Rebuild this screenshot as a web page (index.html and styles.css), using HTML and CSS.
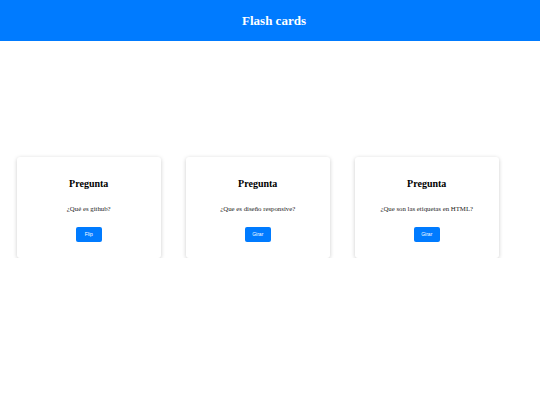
FILE: index.html
```html
<!DOCTYPE html>
<html lang="es">
<head>
<meta charset="utf-8">
<title>Flash cards</title>
<link rel="stylesheet" href="styles.css">
</head>
<body>
<header class="header">
  <h1 class="title">Flash cards</h1>
</header>
<main class="cards">
  <div class="card">
    <h2 class="card-title">Pregunta</h2>
    <p class="card-text">¿Qué es github?</p>
    <button class="btn">Flip</button>
  </div>
  <div class="card">
    <h2 class="card-title">Pregunta</h2>
    <p class="card-text">¿Que es diseño responsive?</p>
    <button class="btn">Girar</button>
  </div>
  <div class="card">
    <h2 class="card-title">Pregunta</h2>
    <p class="card-text">¿Que son las etiquetas en HTML?</p>
    <button class="btn">Girar</button>
  </div>
</main>
</body>
</html>
```
FILE: styles.css
```css
* { box-sizing: border-box; }
html, body { margin: 0; padding: 0; background: #fff; }
body { font-family: "Liberation Serif", "Times New Roman", serif; color: #000; }
.header {
  background: #007bff;
  height: 41px;
  display: flex;
  align-items: center;
  justify-content: center;
  padding: 1px 0 0 8px;
}
.title {
  margin: 0;
  color: #fff;
  font-size: 13px;
  font-weight: bold;
}
.cards {
  display: flex;
  gap: 25.5px;
  padding: 115.5px 0 0 17px;
}
.card {
  width: 143.5px;
  height: 101.5px;
  background: #fff;
  border-radius: 3px;
  box-shadow: 0 1px 4px rgba(0,0,0,0.2);
  display: flex;
  flex-direction: column;
  align-items: center;
  padding-top: 21.5px;
}
.card-title {
  margin: 0;
  font-size: 10px;
  font-weight: bold;
  line-height: 12px;
}
.card-text {
  margin: 14px 0 0;
  font-size: 6.8px;
  line-height: 9px;
  color: #222;
}
.btn {
  margin-top: 13.5px;
  width: 26.5px;
  height: 15px;
  padding: 0;
  border: none;
  border-radius: 2px;
  background: #007bff;
  color: #fff;
  font-family: "Liberation Sans", Arial, sans-serif;
  font-size: 5px;
}
```
